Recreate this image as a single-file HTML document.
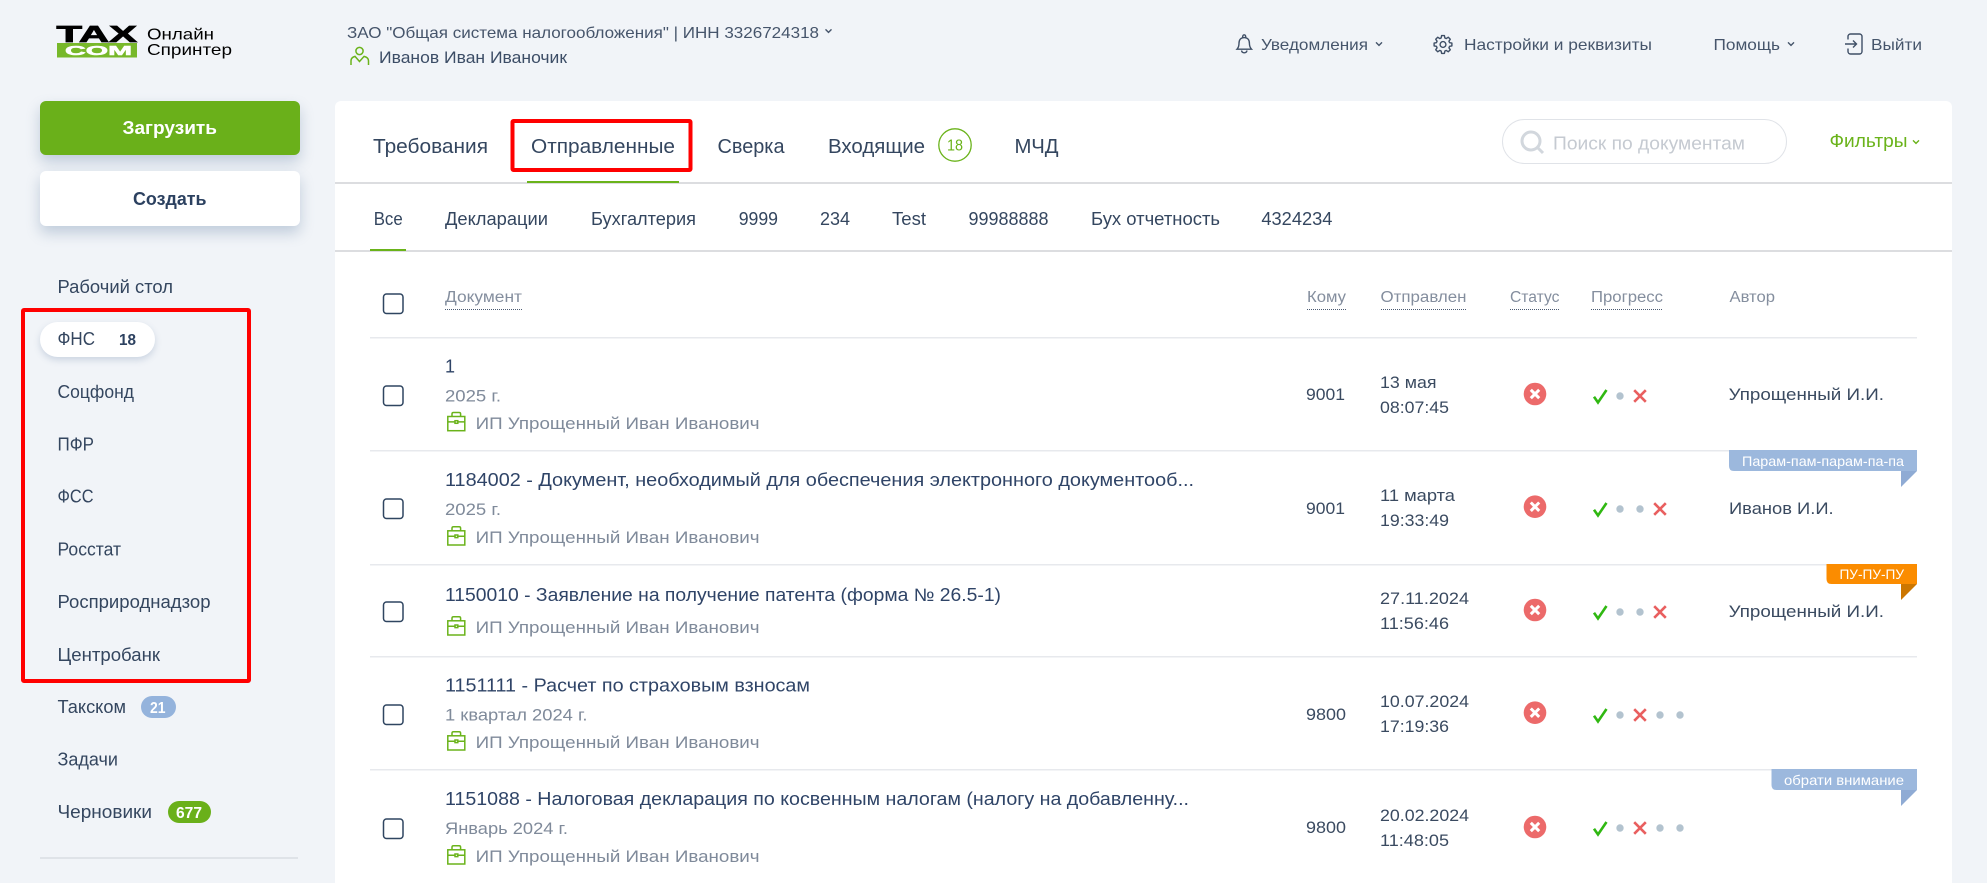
<!DOCTYPE html>
<html lang="ru">
<head>
<meta charset="utf-8">
<title>Такском Онлайн Спринтер</title>
<style>
html,body{margin:0;padding:0;width:1987px;height:883px;overflow:hidden;background:#f1f4f8}
.box{position:absolute;box-sizing:border-box}
svg{position:absolute;left:0;top:0;display:block}
text{font-family:"Liberation Sans","Noto Sans CJK JP",sans-serif}
.s{font-size:18px;fill:#34465f}
.t{font-size:20px;fill:#34465f}
.h{font-size:15.5px;fill:#848e9e}
.d{font-size:18px;fill:#2f4467}
.g{font-size:17px;fill:#7f8a9a}
.c{font-size:17px;fill:#3a4a60}
.m{font-size:16px;fill:#46556b}
.l{font-size:14px;fill:#fff}
</style>
</head>
<body>
<div class="box" style="left:40px;top:101px;width:260px;height:54px;background:#6ab01a;border-radius:6px;box-shadow:0 7px 14px rgba(90,120,160,.32)"></div>
<div class="box" style="left:40px;top:171px;width:260px;height:55px;background:#fff;border-radius:6px;box-shadow:0 7px 14px rgba(90,120,160,.32)"></div>
<div class="box" style="left:40px;top:322px;width:115px;height:35px;background:#fff;border-radius:18px;box-shadow:0 3px 7px rgba(90,120,160,.25)"></div>
<div class="box" style="left:141px;top:696px;width:35px;height:22px;background:#94b3dc;border-radius:11px"></div>
<div class="box" style="left:168px;top:801px;width:43px;height:22px;background:#6ab01a;border-radius:11px"></div>
<div class="box" style="left:40px;top:857px;width:258px;height:1.5px;background:#dfe3e8"></div>
<div class="box" style="left:335px;top:101px;width:1617px;height:782px;background:#fff;border-radius:6px 6px 0 0"></div>
<div class="box" style="left:1502px;top:119px;width:285px;height:45px;border:1.5px solid #e0e3e8;border-radius:23px"></div>

<svg width="1987" height="883" viewBox="0 0 1987 883" xmlns="http://www.w3.org/2000/svg">
<defs>
<g id="case" fill="none" stroke="#6ab31a" stroke-width="1.5">
<rect x="0.8" y="4.8" width="17" height="14.2"/>
<path d="M0.8 10.2h17M5 4.8V2.2Q5 .8 6.5 .8h5.6Q13.6 .8 13.6 2.2V4.8"/>
<rect x="8" y="9" width="2.8" height="2.6" fill="#fff"/>
</g>
<g id="st"><circle r="11.3" fill="#ec6a6a"/><path d="M-4.2-4.2L4.2 4.2M4.2-4.2L-4.2 4.2" stroke="#fff" stroke-width="3" fill="none"/></g>
<path id="ok" d="M-6 .7L-2 6.5L6.5-6" fill="none" stroke="#30b812" stroke-width="2.6"/>
<circle id="dot" r="3.7" fill="#b3c3cf"/>
<path id="no" d="M-5.8-5.8L5.8 5.8M5.8-5.8L-5.8 5.8" fill="none" stroke="#e95f5f" stroke-width="2.6"/>
<path id="chev" d="M-3-1.6L0 1.4L3-1.6" fill="none" stroke="#46556b" stroke-width="1.4"/>
<rect id="cb" width="19.5" height="19.5" rx="3" fill="#fff" stroke="#2f4560" stroke-width="1.5"/>
</defs>

<!-- logo -->
<text x="56.5" y="42" font-size="23" font-weight="700" textLength="80.5" lengthAdjust="spacingAndGlyphs" fill="#000" stroke="#000" stroke-width=".8">TAX</text>
<rect x="57" y="43" width="80" height="14.5" fill="#77b82a"/>
<text x="65" y="55" font-size="12.5" font-weight="700" textLength="67" lengthAdjust="spacingAndGlyphs" fill="#fff" stroke="#fff" stroke-width=".5">COM</text>
<text x="147" y="39.5" font-size="16" textLength="67" lengthAdjust="spacingAndGlyphs" fill="#000">Онлайн</text>
<text x="147" y="55" font-size="16" textLength="85" lengthAdjust="spacingAndGlyphs" fill="#000">Спринтер</text>

<!-- header left -->
<text class="m" x="347" y="38" textLength="472" lengthAdjust="spacingAndGlyphs">ЗАО "Общая система налогообложения" | ИНН 3326724318</text>
<use href="#chev" x="828.5" y="31"/>
<g fill="none" stroke="#6ab31a" stroke-width="1.5">
<circle cx="359.5" cy="51" r="3.6"/>
<path d="M351 65V60.8Q351 57.5 355 56.4L359.5 61.5L364 56.4Q368.5 57.5 368.5 60.8V65"/>
</g>
<text x="379" y="63" font-size="16.5" textLength="188" lengthAdjust="spacingAndGlyphs" fill="#3c4d66">Иванов Иван Иваночик</text>

<!-- header right -->
<g fill="none" stroke="#3f4f66" stroke-width="1.4">
<path d="M1237 49.2H1251.5C1250 47.6 1249.4 46 1249.4 43.3C1249.4 39.8 1247.5 37.6 1244.2 37.6S1239 39.8 1239 43.3C1239 46 1238.5 47.6 1237 49.2Z"/>
<path d="M1242.6 37.6Q1242.6 34.8 1244.2 34.8T1245.8 37.6M1241.5 50.5A2.8 2.8 0 0 0 1247 50.5"/>
<g transform="translate(1443 44.5)" stroke-linejoin="round">
<path d="M6.54-1.87L8.89-1.41L8.89 1.41L6.54 1.87L5.95 3.3L7.28 5.29L5.29 7.28L3.3 5.95L1.87 6.54L1.41 8.89L-1.41 8.89L-1.87 6.54L-3.3 5.95L-5.29 7.28L-7.28 5.29L-5.95 3.3L-6.54 1.87L-8.89 1.41L-8.89-1.41L-6.54-1.87L-5.95-3.3L-7.28-5.29L-5.29-7.28L-3.3-5.95L-1.87-6.54L-1.41-8.89L1.41-8.89L1.87-6.54L3.3-5.95L5.29-7.28L7.28-5.29L5.95-3.3Z"/>
<circle r="2.9"/>
</g>
<path d="M1848 39.5V36.5A2.5 2.5 0 0 1 1850.5 34H1859.5A2.5 2.5 0 0 1 1862 36.5V51.5A2.5 2.5 0 0 1 1859.5 54H1850.5A2.5 2.5 0 0 1 1848 51.5V48.5"/>
<path d="M1845 44H1856.5M1853 40.5L1856.5 44L1853 47.5"/>
</g>
<text class="m" x="1261" y="50" textLength="107" lengthAdjust="spacingAndGlyphs">Уведомления</text>
<use href="#chev" x="1379" y="44"/>
<text class="m" x="1464" y="50" textLength="188" lengthAdjust="spacingAndGlyphs">Настройки и реквизиты</text>
<text class="m" x="1713.5" y="50" textLength="66.5" lengthAdjust="spacingAndGlyphs">Помощь</text>
<use href="#chev" x="1791" y="44"/>
<text class="m" x="1871" y="50" textLength="51" lengthAdjust="spacingAndGlyphs">Выйти</text>

<!-- buttons -->
<text x="122.5" y="134" font-size="18" font-weight="700" textLength="94.5" lengthAdjust="spacingAndGlyphs" fill="#fff">Загрузить</text>
<text x="133" y="205" font-size="18" font-weight="700" textLength="73.5" lengthAdjust="spacingAndGlyphs" fill="#2c4160">Создать</text>

<!-- sidebar -->
<text class="s" x="57.5" y="293" textLength="115.5" lengthAdjust="spacingAndGlyphs">Рабочий стол</text>
<text class="s" x="57.5" y="345" textLength="37.5" lengthAdjust="spacingAndGlyphs">ФНС</text>
<text x="119" y="345" font-size="16" font-weight="700" textLength="17" lengthAdjust="spacingAndGlyphs" fill="#2c4160">18</text>
<text class="s" x="57.5" y="398" textLength="76.5" lengthAdjust="spacingAndGlyphs">Соцфонд</text>
<text class="s" x="57.5" y="450.5" textLength="36.5" lengthAdjust="spacingAndGlyphs">ПФР</text>
<text class="s" x="57.5" y="502.5" textLength="36" lengthAdjust="spacingAndGlyphs">ФСС</text>
<text class="s" x="57.5" y="555.5" textLength="63.5" lengthAdjust="spacingAndGlyphs">Росстат</text>
<text class="s" x="57.5" y="608" textLength="153" lengthAdjust="spacingAndGlyphs">Росприроднадзор</text>
<text class="s" x="57.5" y="661" textLength="102.5" lengthAdjust="spacingAndGlyphs">Центробанк</text>
<text class="s" x="57.5" y="713" textLength="68.5" lengthAdjust="spacingAndGlyphs">Такском</text>
<text x="150" y="713" font-size="16" font-weight="700" textLength="15.5" lengthAdjust="spacingAndGlyphs" fill="#fff">21</text>
<text class="s" x="57.5" y="765.5" textLength="60.5" lengthAdjust="spacingAndGlyphs">Задачи</text>
<text class="s" x="57.5" y="818" textLength="94.5" lengthAdjust="spacingAndGlyphs">Черновики</text>
<text x="176" y="818" font-size="16" font-weight="700" textLength="26" lengthAdjust="spacingAndGlyphs" fill="#fff">677</text>

<!-- tabs -->
<text class="t" x="373" y="153" textLength="115" lengthAdjust="spacingAndGlyphs">Требования</text>
<text class="t" x="531" y="153" textLength="144" lengthAdjust="spacingAndGlyphs">Отправленные</text>
<text class="t" x="717.5" y="153" textLength="67" lengthAdjust="spacingAndGlyphs">Сверка</text>
<text class="t" x="828" y="153" textLength="97" lengthAdjust="spacingAndGlyphs">Входящие</text>
<circle cx="955" cy="145" r="16.2" fill="#fff" stroke="#6ab31a" stroke-width="1.3"/>
<text x="947" y="150.5" font-size="16" textLength="16" lengthAdjust="spacingAndGlyphs" fill="#6ab31a">18</text>
<text class="t" x="1014.5" y="153" textLength="44" lengthAdjust="spacingAndGlyphs">МЧД</text>
<rect x="335" y="182" width="1617" height="2" fill="#dcdde0"/>
<rect x="527" y="181" width="152" height="2" fill="#6ab31a"/>

<!-- search -->
<g fill="none" stroke="#d2d7dd" stroke-width="3">
<circle cx="1531" cy="141" r="9"/>
<path d="M1537.5 147.5L1543 153"/>
</g>
<text x="1553" y="149.5" font-size="18" textLength="192" lengthAdjust="spacingAndGlyphs" fill="#c5cad1">Поиск по документам</text>
<text x="1829.5" y="147" font-size="18" textLength="78" lengthAdjust="spacingAndGlyphs" fill="#6ab31a">Фильтры</text>
<path d="M1913 140.4L1916 143.4L1919 140.4" fill="none" stroke="#6ab31a" stroke-width="1.4"/>

<!-- subtabs -->
<text class="s" x="373.7" y="225" textLength="29" lengthAdjust="spacingAndGlyphs">Все</text>
<text class="s" x="445" y="225" textLength="103" lengthAdjust="spacingAndGlyphs">Декларации</text>
<text class="s" x="591" y="225" textLength="105" lengthAdjust="spacingAndGlyphs">Бухгалтерия</text>
<text class="s" x="738.7" y="225" textLength="39.3" lengthAdjust="spacingAndGlyphs">9999</text>
<text class="s" x="820" y="225" textLength="30" lengthAdjust="spacingAndGlyphs">234</text>
<text class="s" x="892" y="225" textLength="34" lengthAdjust="spacingAndGlyphs">Test</text>
<text class="s" x="968.5" y="225" textLength="80" lengthAdjust="spacingAndGlyphs">99988888</text>
<text class="s" x="1091" y="225" textLength="129" lengthAdjust="spacingAndGlyphs">Бух отчетность</text>
<text class="s" x="1261.4" y="225" textLength="71" lengthAdjust="spacingAndGlyphs">4324234</text>
<rect x="335" y="250" width="1617" height="2" fill="#dcdde0"/>
<rect x="370" y="249" width="36" height="2" fill="#6ab31a"/>

<!-- table head -->
<use href="#cb" x="383.5" y="294"/>
<text class="h" x="445" y="302" textLength="77" lengthAdjust="spacingAndGlyphs">Документ</text>
<text class="h" x="1307" y="302" textLength="39" lengthAdjust="spacingAndGlyphs">Кому</text>
<text class="h" x="1380.5" y="302" textLength="86" lengthAdjust="spacingAndGlyphs">Отправлен</text>
<text class="h" x="1510" y="302" textLength="49.5" lengthAdjust="spacingAndGlyphs">Статус</text>
<text class="h" x="1591" y="302" textLength="72" lengthAdjust="spacingAndGlyphs">Прогресс</text>
<text class="h" x="1729.5" y="302" textLength="45.5" lengthAdjust="spacingAndGlyphs">Автор</text>
<g stroke="#4a5a72" stroke-width="1" stroke-dasharray="1 1">
<path d="M445 309.5H522M1307 309.5H1346M1381 309.5H1467M1510 309.5H1559.5M1591 309.5H1663"/>
</g>

<!-- separators -->
<g fill="#e7e9ed">
<rect x="370" y="337" width="1547" height="1.5"/>
<rect x="370" y="450" width="1547" height="1.5"/>
<rect x="370" y="564" width="1547" height="1.5"/>
<rect x="370" y="656" width="1547" height="1.5"/>
<rect x="370" y="769" width="1547" height="1.5"/>
</g>

<!-- row 1 -->
<use href="#cb" x="383.5" y="386"/>
<text class="d" x="445" y="372.5">1</text>
<text class="g" x="445" y="401.5" textLength="56" lengthAdjust="spacingAndGlyphs">2025 г.</text>
<use href="#case" x="447" y="411.7"/>
<text class="g" x="475.6" y="429" textLength="284" lengthAdjust="spacingAndGlyphs">ИП Упрощенный Иван Иванович</text>
<text class="c" x="1306" y="400" textLength="39" lengthAdjust="spacingAndGlyphs">9001</text>
<text class="c" x="1380" y="388" textLength="56.5" lengthAdjust="spacingAndGlyphs">13 мая</text>
<text class="c" x="1380" y="413" textLength="69" lengthAdjust="spacingAndGlyphs">08:07:45</text>
<use href="#st" x="1535" y="394"/>
<use href="#ok" x="1600" y="396"/><use href="#dot" x="1620" y="396"/><use href="#no" x="1640" y="396"/>
<text class="c" x="1728.6" y="400" textLength="155.4" lengthAdjust="spacingAndGlyphs">Упрощенный И.И.</text>

<!-- row 2 -->
<use href="#cb" x="383.5" y="499"/>
<text class="d" x="445" y="486" textLength="749" lengthAdjust="spacingAndGlyphs">1184002 - Документ, необходимый для обеспечения электронного документооб...</text>
<text class="g" x="445" y="515" textLength="56" lengthAdjust="spacingAndGlyphs">2025 г.</text>
<use href="#case" x="447" y="526"/>
<text class="g" x="475.6" y="543" textLength="284" lengthAdjust="spacingAndGlyphs">ИП Упрощенный Иван Иванович</text>
<text class="c" x="1306" y="514" textLength="39" lengthAdjust="spacingAndGlyphs">9001</text>
<text class="c" x="1380" y="501" textLength="75" lengthAdjust="spacingAndGlyphs">11 марта</text>
<text class="c" x="1380" y="526" textLength="69" lengthAdjust="spacingAndGlyphs">19:33:49</text>
<use href="#st" x="1535" y="506.7"/>
<use href="#ok" x="1600" y="509"/><use href="#dot" x="1620" y="509"/><use href="#dot" x="1640" y="509"/><use href="#no" x="1660" y="509"/>
<text class="c" x="1729" y="514" textLength="104.6" lengthAdjust="spacingAndGlyphs">Иванов И.И.</text>
<path d="M1729 450H1917V471H1734Q1729 471 1729 466Z" fill="#9cb8dd"/>
<path d="M1901 471H1917L1901 487Z" fill="#8fabd4"/>
<text class="l" x="1742" y="466" textLength="162" lengthAdjust="spacingAndGlyphs">Парам-пам-парам-па-па</text>

<!-- row 3 -->
<use href="#cb" x="383.5" y="602"/>
<text class="d" x="445" y="601" textLength="556" lengthAdjust="spacingAndGlyphs">1150010 - Заявление на получение патента (форма № 26.5-1)</text>
<use href="#case" x="447" y="616"/>
<text class="g" x="475.6" y="633" textLength="284" lengthAdjust="spacingAndGlyphs">ИП Упрощенный Иван Иванович</text>
<text class="c" x="1380" y="604" textLength="89" lengthAdjust="spacingAndGlyphs">27.11.2024</text>
<text class="c" x="1380" y="629" textLength="69" lengthAdjust="spacingAndGlyphs">11:56:46</text>
<use href="#st" x="1535" y="610"/>
<use href="#ok" x="1600" y="612"/><use href="#dot" x="1620" y="612"/><use href="#dot" x="1640" y="612"/><use href="#no" x="1660" y="612"/>
<text class="c" x="1728.6" y="617" textLength="155.4" lengthAdjust="spacingAndGlyphs">Упрощенный И.И.</text>
<path d="M1826.5 564H1917V584H1831.5Q1826.5 584 1826.5 579Z" fill="#fb8c00"/>
<path d="M1901 584H1917L1901 600Z" fill="#cc7600"/>
<text class="l" x="1839.5" y="579" textLength="64.5" lengthAdjust="spacingAndGlyphs">ПУ-ПУ-ПУ</text>

<!-- row 4 -->
<use href="#cb" x="383.5" y="705"/>
<text class="d" x="445" y="691.5" textLength="365" lengthAdjust="spacingAndGlyphs">1151111 - Расчет по страховым взносам</text>
<text class="g" x="445" y="720.5" textLength="142.5" lengthAdjust="spacingAndGlyphs">1 квартал 2024 г.</text>
<use href="#case" x="447" y="731"/>
<text class="g" x="475.6" y="748" textLength="284" lengthAdjust="spacingAndGlyphs">ИП Упрощенный Иван Иванович</text>
<text class="c" x="1306" y="720" textLength="40" lengthAdjust="spacingAndGlyphs">9800</text>
<text class="c" x="1380" y="707" textLength="89" lengthAdjust="spacingAndGlyphs">10.07.2024</text>
<text class="c" x="1380" y="732" textLength="69" lengthAdjust="spacingAndGlyphs">17:19:36</text>
<use href="#st" x="1535" y="712.7"/>
<use href="#ok" x="1600" y="715"/><use href="#dot" x="1620" y="715"/><use href="#no" x="1640" y="715"/><use href="#dot" x="1660" y="715"/><use href="#dot" x="1680" y="715"/>

<!-- row 5 -->
<use href="#cb" x="383.5" y="819"/>
<text class="d" x="445" y="805" textLength="744" lengthAdjust="spacingAndGlyphs">1151088 - Налоговая декларация по косвенным налогам (налогу на добавленну...</text>
<text class="g" x="445" y="834" textLength="123" lengthAdjust="spacingAndGlyphs">Январь 2024 г.</text>
<use href="#case" x="447" y="845"/>
<text class="g" x="475.6" y="862" textLength="284" lengthAdjust="spacingAndGlyphs">ИП Упрощенный Иван Иванович</text>
<text class="c" x="1306" y="833" textLength="40" lengthAdjust="spacingAndGlyphs">9800</text>
<text class="c" x="1380" y="821" textLength="89" lengthAdjust="spacingAndGlyphs">20.02.2024</text>
<text class="c" x="1380" y="846" textLength="69" lengthAdjust="spacingAndGlyphs">11:48:05</text>
<use href="#st" x="1535" y="827"/>
<use href="#ok" x="1600" y="828"/><use href="#dot" x="1620" y="828"/><use href="#no" x="1640" y="828"/><use href="#dot" x="1660" y="828"/><use href="#dot" x="1680" y="828"/>
<path d="M1771.5 769H1917V790H1776.5Q1771.5 790 1771.5 785Z" fill="#9cb8dd"/>
<path d="M1901 790H1917L1901 806Z" fill="#8fabd4"/>
<text class="l" x="1784" y="785" textLength="120" lengthAdjust="spacingAndGlyphs">обрати внимание</text>

<!-- red annotation boxes -->
<rect x="23" y="310" width="226" height="371" fill="none" stroke="#ff0000" stroke-width="4" rx="1"/>
<rect x="512.5" y="121" width="178" height="49" fill="none" stroke="#ff0000" stroke-width="4" rx="1"/>
</svg>
</body>
</html>
